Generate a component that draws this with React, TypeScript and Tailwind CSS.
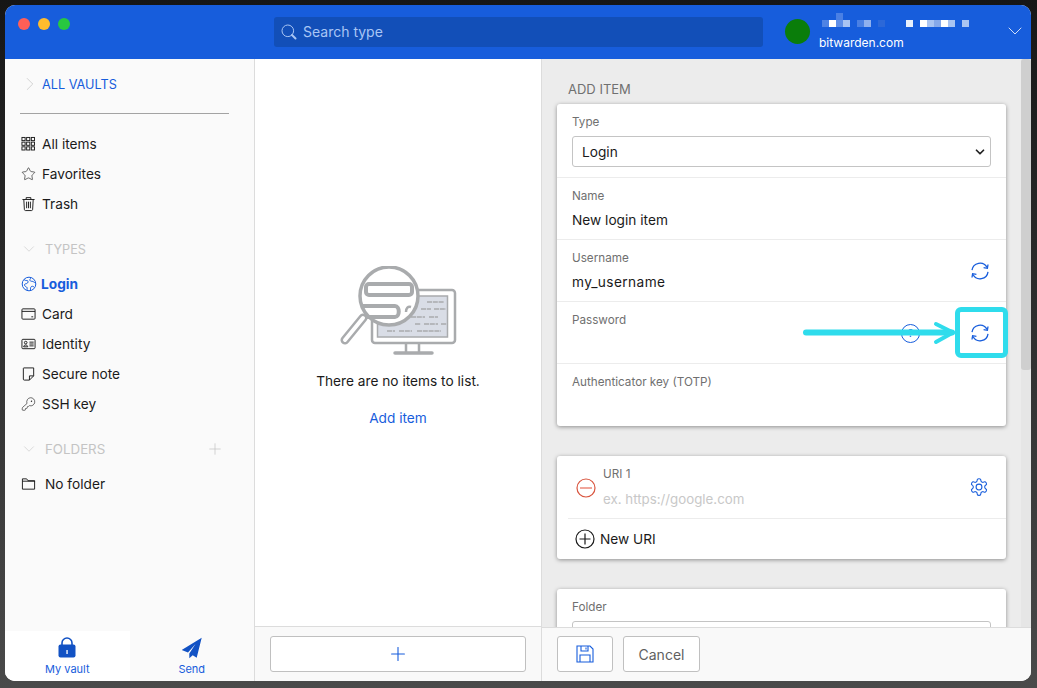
import React from "react";
import { ChevronRight, ChevronDown, Star, Plus, KeyRound } from "lucide-react";

const mosaic = [
  "bg-[#4f83e4]", "bg-white", "bg-[#5f8fe8]", "bg-[#a9c4f2]", "", "bg-[#4a80e4]", "bg-[#8fb0ee]", "", "bg-[#2c68d8]", "", "", "",
  "bg-[#e8f0fc]", "", "bg-white", "bg-[#a9c4f2]", "bg-[#86a9ea]", "bg-white", "bg-[#a9c4f2]", "", "bg-[#a9c4f2]",
];

function Ic({ children, className = "" }: { children: React.ReactNode; className?: string }) {
  return (
    <svg viewBox="0 0 16 16" width="16" height="16" fill="none" stroke="currentColor" strokeWidth="1" className={className}>
      {children}
    </svg>
  );
}

const GridIcon = () => (
  <Ic>
    {[1, 6, 11].map((y) =>
      [1, 6, 11].map((x) => <rect key={`${x}-${y}`} x={x} y={y} width="3.4" height="3.4" />)
    )}
  </Ic>
);
const TrashIcon = () => (
  <Ic>
    <path d="M1.500 3.200h13M5.500 3V1.200h5V3M3 3.200l.6 10.600c0 .7.5 1.200 1.200 1.200h6.400c.7 0 1.200-.5 1.200-1.200L13 3.200M6 5.500v7M8 5.500v7M10 5.500v7" />
  </Ic>
);
const GlobeIcon = () => (
  <Ic>
    <circle cx="8" cy="8" r="6.800" />
    <path d="M3 3.500c1 1 2 1 3 1s1.500 1.500.5 2.500-2.500.5-3 1.500 1 2 2 2.500.5 2 .5 3M10 1.800c-.5 1-1.500 1.500-1 2.700s2 .5 3 1 2 1.500 2.700 1M13 11c-1-.8-2-1-2.800-.3s-.7 2 -.7 3.500" />
  </Ic>
);
const CardIcon = () => (
  <Ic>
    <rect x="1" y="2.500" width="14" height="11" rx="1" />
    <path d="M1 5.200h14M11 11h2" />
  </Ic>
);
const IdIcon = () => (
  <Ic>
    <rect x="1" y="3" width="14" height="10" rx="1" />
    <circle cx="5" cy="6.500" r="1.400" />
    <path d="M2.800 11c0-2.600 4.400-2.600 4.400 0zM9 6h4.500M9 8h4.500M9 10h4.500" />
  </Ic>
);
const NoteIcon = () => (
  <Ic>
    <path d="M3 1.500h10.500v8.500l-4.500 4.500H3.500a1 1 0 0 1-1-1V2a.5.5 0 0 1 .5-.5zM13.500 10H9v4.500" />
  </Ic>
);
const FolderIcon = () => (
  <Ic>
    <path d="M1.500 13.500V2.500h4.500l1.500 2h7v9zM1.500 5h13.500" />
  </Ic>
);

function NavItem({ icon, label, active = false, gap = "gap-[6px]" }: { icon: React.ReactNode; label: string; active?: boolean; gap?: string }) {
  return (
    <div className={`flex h-[30px] items-center ${gap} pl-[16px] ${active ? "font-bold text-[#175ddc]" : "text-[#1a1a1a]"}`}>
      <span className="flex w-[15px] items-center justify-center">{icon}</span>
      <span>{label}</span>
    </div>
  );
}

function Section({ label, labelSize, plus = false }: { label: string; labelSize: string; plus?: boolean }) {
  return (
    <div className="flex h-[30px] items-center pl-[15px] pr-[31px] text-[#c4c4c4]">
      <ChevronDown size={22} strokeWidth={0.8} className="w-[18px]" />
      <span className={`ml-[7px] flex-1 pt-[1px] ${labelSize}`}>{label}</span>
      {plus && <Plus size={18} strokeWidth={1} className="mr-[-1px]" />}
    </div>
  );
}

function Field({ label, value, icon }: { label: string; value?: React.ReactNode; icon?: React.ReactNode }) {
  return (
    <div className="relative h-[62px] border-b border-[#ececec] pl-[15px] pt-[11px] last:border-b-0">
      <div className="h-[14px] text-[11.700px] leading-[14px] text-[#707070]">{label}</div>
      <div className="mt-[7px] h-[20px] leading-[20px] text-[#1a1a1a]">{value}</div>
      {icon && <div className="absolute right-[16px] top-[21px] flex h-[20px] w-[20px] items-center justify-center text-[#175ddc]">{icon}</div>}
    </div>
  );
}

function Refresh() {
  return (
    <svg viewBox="0 0 20 20" width="20" height="20" fill="none" stroke="currentColor" strokeWidth="1.300" className="shrink-0">
      <path d="M2 9.200A8 8 0 0 1 17 6.500" />
      <path d="M18 3.500l-.6 3.800-3.800-.6" />
      <path d="M18 10.800A8 8 0 0 1 3 13.500" />
      <path d="M2 16.500l.6-3.800 3.800.6" />
    </svg>
  );
}

function Illustration() {
  return (
    <svg width="118" height="90" viewBox="0 0 118 90" fill="none" stroke="#a9abad" strokeWidth="2.500">
      <rect x="33" y="24" width="83" height="53" rx="3" fill="#fff" />
      <rect x="38.500" y="30" width="70" height="41" fill="#d9dde6" stroke="#a9abad" strokeWidth="1.500" />
      <path d="M88 36h17M82 43h10M95 43h12M72 51h14M90 51h9M85 58h14M76 58h6M102 58h6M48 65h8M60 65h13M78 65h24" stroke="#a9abad" strokeWidth="1.300" strokeDasharray="5 .8" />
      <path d="M67 78v8M80 78v8" strokeWidth="2.500" />
      <path d="M56 87h37" strokeWidth="3.500" strokeLinecap="round" />
      <path d="M24 52 6 74" stroke="#a9abad" strokeWidth="9" strokeLinecap="round" />
      <path d="M24 52 6 74" stroke="#fff" strokeWidth="4" strokeLinecap="round" />
      <circle cx="50" cy="30" r="29" fill="#fff" strokeWidth="3.500" />
      <rect x="27" y="18" width="46" height="11" rx="3" strokeWidth="4" />
      <path d="M24 40h32c5 0 5 11 0 11H26" strokeWidth="4" />
      <path d="M72 41c-3-1-5 1-5 5" strokeWidth="2.500" />
    </svg>
  );
}

export default function App() {
  return (
    <div
      className="relative h-[688px] w-[1037px] overflow-hidden bg-[linear-gradient(180deg,#161616_0%,#2b2b2b_40%,#4a4a4a_100%)] pl-[5px] pt-[5px] text-[13.700px] text-[#1a1a1a]"
      style={{ fontFamily: '"Inter", "Liberation Sans", sans-serif' }}
    >
      <div className="flex h-[676px] w-[1026px] flex-col overflow-hidden rounded-[10px] bg-white">
        {/* Header */}
        <header className="flex h-[54px] shrink-0 bg-[#175ddc]">
          <div className="flex h-[38px] w-[269px] items-center gap-[8px] pl-[13px]">
            <span className="h-[12px] w-[12px] rounded-full bg-[#ff5f57]" />
            <span className="h-[12px] w-[12px] rounded-full bg-[#febc2e]" />
            <span className="h-[12px] w-[12px] rounded-full bg-[#28c840]" />
          </div>
          <div className="mt-[12px] flex h-[30px] w-[489px] items-center gap-[6px] rounded-[3px] bg-[#124fb8] pl-[7px] text-[14px] text-[#a9c6f5]">
            <svg viewBox="0 0 16 16" width="16" height="16" fill="none" stroke="currentColor" strokeWidth="1">
              <circle cx="6.800" cy="6.800" r="5.800" />
              <path d="m11 11 1 1 2.500 2.500" strokeWidth="2" strokeLinecap="round" />
            </svg>
            <span className="mb-[1px]">Search type</span>
          </div>
          <div className="ml-[22px] mt-[14px] h-[25px] w-[25px] rounded-full bg-[#0a7d0a]" />
          <div className="ml-[9px] flex w-[185px] flex-col pt-[8px]">
            <div className="relative h-[14px]">
              <div className="absolute left-[3px] top-[7px] flex">
                {mosaic.map((c, i) => (
                  <span key={i} className={`h-[7px] w-[7px] ${c}`} />
                ))}
              </div>
              <span className="absolute left-[17px] top-0 h-[7px] w-[7px] bg-[#4a80e4]" />
            </div>
            <div className="mt-[7px] text-[12px] leading-[17px] text-white">bitwarden.com</div>
          </div>
          <ChevronDown size={24} strokeWidth={0.8} className="ml-[-1px] mt-[14px] text-white" />
        </header>

        <div className="flex min-h-0 flex-1">
          {/* Sidebar */}
          <aside className="flex w-[250px] shrink-0 flex-col border-r border-[#dcdcdc] bg-[#fafafa]">
            <div className="flex h-[50px] items-center pl-[14px]">
              <ChevronRight size={22} strokeWidth={0.8} className="text-[#c4c4c4]" />
              <span className="ml-[1px] pt-[1px] text-[12.700px] text-[#175ddc]">ALL VAULTS</span>
            </div>
            <div className="mx-[15px] mt-[4px] h-px w-[209px] bg-[#a3a3a3]" />
            <div className="mt-[15px]">
              <NavItem icon={<GridIcon />} label="All items" />
              <NavItem icon={<Star size={16} strokeWidth={1} />} label="Favorites" />
              <NavItem icon={<TrashIcon />} label="Trash" />
            </div>
            <div className="mt-[15px]">
              <Section label="TYPES" labelSize="text-[12.700px]" />
            </div>
            <div className="mt-[5px]">
              <NavItem icon={<span className="text-[#175ddc]"><GlobeIcon /></span>} label="Login" active gap="gap-[5px]" />
              <NavItem icon={<CardIcon />} label="Card" />
              <NavItem icon={<IdIcon />} label="Identity" />
              <NavItem icon={<NoteIcon />} label="Secure note" />
              <NavItem icon={<KeyRound size={16} strokeWidth={1} />} label="SSH key" />
            </div>
            <div className="mt-[15px]">
              <Section label="FOLDERS" labelSize="text-[13.300px]" plus />
            </div>
            <div className="mt-[5px]">
              <NavItem icon={<FolderIcon />} label="No folder" gap="gap-[9px]" />
            </div>
            <nav className="mt-auto grid h-[50px] grid-cols-2 text-[11px] text-[#175ddc]">
              <div className="flex flex-col items-center bg-white pt-[6px]">
                <svg viewBox="0 0 18 21" width="18" height="21" fill="#1252c4">
                  <path d="M4 9V6a5 5 0 0 1 10 0v3" fill="none" stroke="#1252c4" strokeWidth="1.600" />
                  <rect x="0.500" y="7.500" width="17" height="13" rx="2" />
                  <rect x="8.400" y="13" width="1.300" height="4" fill="#fff" />
                </svg>
                <span className="mt-[4px] leading-[15px]">My vault</span>
              </div>
              <div className="flex flex-col items-center pt-[6px]">
                <svg viewBox="0 0 22 22" width="22" height="22" fill="#1252c4">
                  <path d="M20.700.7.7 13l6.300 2.500L14.500 7 8.300 16.500v4.800l3.400-3 4 2.400z" />
                </svg>
                <span className="mt-[3px] leading-[15px]">Send</span>
              </div>
            </nav>
          </aside>

          {/* Middle */}
          <section className="flex w-[287px] shrink-0 flex-col border-r border-[#dcdcdc] bg-white">
            <div className="flex min-h-0 flex-1 flex-col items-center pt-[207px]">
              <Illustration />
              <div className="mt-[15px] leading-[20px]">There are no items to list.</div>
              <div className="mt-[17px] leading-[20px] text-[#175ddc]">Add item</div>
            </div>
            <div className="flex h-[55px] shrink-0 items-start border-t border-[#dcdcdc] bg-[#f9f9f9] px-[15px] pt-[9px]">
              <button className="flex h-[36px] w-[256px] items-center justify-center rounded-[3px] border border-[#c0c0c0] bg-white text-[#175ddc]">
                <Plus size={22} strokeWidth={1.2} />
              </button>
            </div>
          </section>

          {/* Right */}
          <section className="flex min-w-0 flex-1 flex-col bg-[#ececec]">
            <div className="flex min-h-0 flex-1">
              <div className="min-w-0 flex-1 overflow-hidden pl-[15px] pr-[15px]">
                <div className="flex h-[45px] items-end pb-[6px] pl-[11px] text-[13px] leading-[18px] text-[#707070]">ADD ITEM</div>
                <div className="rounded-[3px] bg-white shadow-[0_1px_4px_rgba(0,0,0,0.4)]">
                  <div className="h-[74px] border-b border-[#ececec] px-[15px] pt-[11px]">
                    <div className="h-[14px] text-[11.700px] leading-[14px] text-[#707070]">Type</div>
                    <div className="mt-[7px] flex h-[31px] items-center justify-between rounded-[3px] border border-[#c4c4c4] bg-white pl-[9px] pr-[3px]">
                      <span className="pt-[1px]">Login</span>
                      <ChevronDown size={14} strokeWidth={3} className="text-[#222]" />
                    </div>
                  </div>
                  <Field label="Name" value="New login item" />
                  <Field label="Username" value={<span className="tracking-[0.4px]">my_username</span>} icon={<Refresh />} />
                  <Field
                    label="Password"
                    icon={
                      <div className="flex items-center gap-[50px]">
                        <span className="ml-[-69px] flex h-[19px] w-[19px] shrink-0 items-center justify-center rounded-full border border-[#175ddc] text-[10px] leading-none">?</span>
                        <Refresh />
                      </div>
                    }
                  />
                  <Field label="Authenticator key (TOTP)" />
                </div>

                <div className="mt-[30px] rounded-[3px] bg-white shadow-[0_1px_4px_rgba(0,0,0,0.4)]">
                  <div className="ml-[11px] flex h-[63px] items-center border-b border-[#ececec] pl-[8px] pr-[17px]">
                    <svg viewBox="0 0 20 20" width="20" height="20" fill="none" className="mt-[1px]">
                      <circle cx="10" cy="10" r="9" stroke="#d9553f" strokeWidth="1.200" />
                      <path d="M4 10h12" stroke="#f0a69b" strokeWidth="2" />
                    </svg>
                    <div className="ml-[7px] flex-1 pt-[1px]">
                      <div className="h-[14px] text-[11.700px] leading-[14px] text-[#707070]">URI 1</div>
                      <div className="mt-[8px] text-[13.300px] leading-[20px] text-[#c8c8c8]">ex. https://google.com</div>
                    </div>
                    <svg viewBox="0 0 24 24" width="20" height="20" fill="none" stroke="#175ddc" strokeWidth="1.300">
                      <path d="M12.220 2h-.44a2 2 0 0 0-2 2v.18a2 2 0 0 1-1 1.730l-.43.250a2 2 0 0 1-2 0l-.15-.080a2 2 0 0 0-2.730.730l-.22.380a2 2 0 0 0 .730 2.730l.15.100a2 2 0 0 1 1 1.720v.510a2 2 0 0 1-1 1.740l-.15.090a2 2 0 0 0-.730 2.730l.22.380a2 2 0 0 0 2.730.730l.15-.080a2 2 0 0 1 2 0l.43.250a2 2 0 0 1 1 1.730V20a2 2 0 0 0 2 2h.44a2 2 0 0 0 2-2v-.18a2 2 0 0 1 1-1.730l.43-.250a2 2 0 0 1 2 0l.15.080a2 2 0 0 0 2.730-.730l.22-.390a2 2 0 0 0-.730-2.730l-.15-.080a2 2 0 0 1-1-1.740v-.500a2 2 0 0 1 1-1.740l.15-.090a2 2 0 0 0 .730-2.730l-.22-.380a2 2 0 0 0-2.730-.730l-.15.080a2 2 0 0 1-2 0l-.43-.250a2 2 0 0 1-1-1.730V4a2 2 0 0 0-2-2z" />
                      <circle cx="12" cy="12" r="3.500" />
                    </svg>
                  </div>
                  <div className="flex h-[40px] items-center gap-[5px] pl-[18px]">
                    <svg viewBox="0 0 20 20" width="20" height="20" fill="none" stroke="#1a1a1a" strokeWidth="1.200">
                      <circle cx="10" cy="10" r="9" />
                      <path d="M10 4.500v11M4.500 10h11" />
                    </svg>
                    <span>New URI</span>
                  </div>
                </div>

                <div className="mt-[30px] h-[60px] rounded-[3px] bg-white px-[15px] pt-[11px] shadow-[0_1px_4px_rgba(0,0,0,0.4)]">
                  <div className="h-[14px] text-[11.700px] leading-[14px] text-[#707070]">Folder</div>
                  <div className="mt-[7px] h-[31px] rounded-[3px] border border-[#c4c4c4]" />
                </div>
              </div>
              <div className="w-[10px] shrink-0 bg-[#e6e6e6]">
                <div className="h-[311px] rounded-[3px] bg-[#cfcfcf]" />
              </div>
            </div>
            <div className="flex h-[54px] shrink-0 items-start gap-[10px] border-t border-[#dcdcdc] bg-[#f9f9f9] pl-[15px] pt-[8px]">
              <button className="flex h-[36px] w-[56px] items-center justify-center rounded-[3px] border border-[#c0c0c0] bg-white text-[#175ddc]">
                <svg viewBox="0 0 18 18" width="18" height="18" fill="none" stroke="currentColor" strokeWidth="1.100">
                  <path d="M1 1h13l3 3v13H1zM5 1v5h7V1M10 2.500v2M4 17v-7h10v7" />
                </svg>
              </button>
              <button className="flex h-[36px] w-[77px] items-center justify-center rounded-[3px] border border-[#c0c0c0] bg-white text-[14px] text-[#5f5f5f]">Cancel</button>
            </div>
          </section>
        </div>
      </div>

      {/* Annotation */}
      <div className="absolute left-[955px] top-[307px] h-[51px] w-[53px] rounded-[6px] border-[5px] border-[#2fdcec]" />
      <svg className="absolute left-[800px] top-[318px]" width="160" height="30" fill="none" stroke="#2fdcec" strokeLinecap="round" strokeLinejoin="round">
        <path d="M6 14.500h146" strokeWidth="6" />
        <path d="M136 6l17 8.500L136 24" strokeWidth="4" />
      </svg>
    </div>
  );
}
